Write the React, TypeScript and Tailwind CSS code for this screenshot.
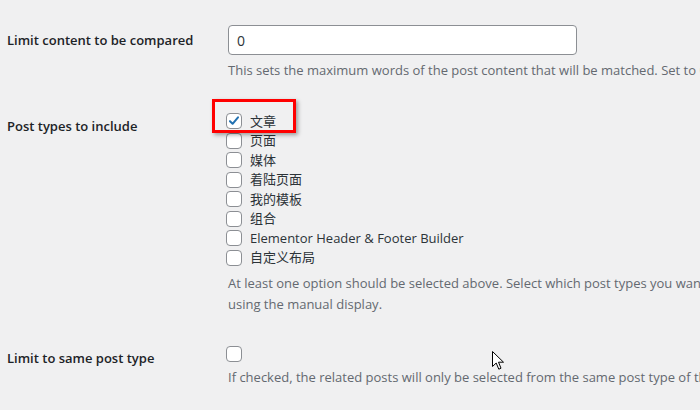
import React from "react";

const postTypes = [
  { label: "文章", checked: true },
  { label: "页面", checked: false },
  { label: "媒体", checked: false },
  { label: "着陆页面", checked: false },
  { label: "我的模板", checked: false },
  { label: "组合", checked: false },
  { label: "Elementor Header & Footer Builder", checked: false },
  { label: "自定义布局", checked: false },
];

function Checkbox({ checked = false }: { checked?: boolean }) {
  return (
    <span className="-ml-[2px] flex h-[16px] w-[16px] shrink-0 items-center justify-center rounded-[4px] border border-[#8c8f94] bg-white">
      {checked && (
        <svg viewBox="0 0 16 16" className="h-[14px] w-[14px]">
          <path d="M3.4 8.2 L6.4 11.2 L12.6 3.8" fill="none" stroke="#2271b1" strokeWidth="2.3" strokeLinecap="round" strokeLinejoin="round" />
        </svg>
      )}
    </span>
  );
}

function Cursor() {
  return (
    <svg viewBox="0 0 13 20" className="absolute left-[492px] top-[351px] h-[20px] w-[13px]">
      <path d="M0.5 0.5 L0.5 15.5 L4.2 12 L6.8 18.2 L9 17.2 L6.5 11.2 L11.5 11.2 Z" fill="white" stroke="black" strokeWidth="1" strokeLinejoin="miter" />
    </svg>
  );
}

export default function App() {
  return (
    <div className="relative h-[410px] w-[700px] overflow-hidden bg-[#f0f0f1] pl-[7px] font-['Open_Sans','Noto_Sans_CJK_SC',sans-serif] text-[#1d2327]">
      <div className="flex pt-[25px]">
        <div className="w-[221px] shrink-0 text-[13px] font-semibold leading-[30px]">Limit content to be compared</div>
        <div className="min-w-0 flex-1">
          <div className="flex h-[30px] w-[349px] items-center rounded-[4px] border border-[#8c8f94] bg-white px-[8px] text-[14px] text-[#2c3338]">0</div>
          <p className="mt-[6px] whitespace-nowrap text-[13px] leading-[19.5px] text-[#646970]">
            This sets the maximum words of the post content that will be matched. Set to 0 for no limit.
          </p>
        </div>
      </div>

      <div className="mt-[31px] flex">
        <div className="w-[221px] shrink-0 pt-[4px] text-[13px] font-semibold leading-[20px]">Post types to include</div>
        <div className="min-w-0 flex-1">
          <ul>
            {postTypes.map((t) => (
              <li key={t.label} className="flex h-[19.5px] items-center gap-[8px] text-[13px] text-[#2c3338]">
                <Checkbox checked={t.checked} />
                <span className="whitespace-nowrap leading-[19.5px]">{t.label}</span>
              </li>
            ))}
          </ul>
          <p className="mt-[5px] whitespace-nowrap text-[13px] leading-[21px] text-[#646970]">
            At least one option should be selected above. Select which post types you want to include.
            <br />
            using the manual display.
          </p>
        </div>
      </div>

      <div className="mt-[31px] flex">
        <div className="w-[221px] shrink-0 pt-[2px] text-[13px] font-semibold leading-[20px]">Limit to same post type</div>
        <div className="min-w-0 flex-1">
          <Checkbox />
          <p className="mt-[6px] whitespace-nowrap text-[13px] leading-[19.5px] text-[#646970]">
            If checked, the related posts will only be selected from the same post type of the current post.
          </p>
        </div>
      </div>

      <div className="absolute left-[212px] top-[99px] h-[34px] w-[84px] border-[3px] border-[#f00] shadow-[2px_2px_4px_rgba(0,0,0,0.35)]" />
      <Cursor />
    </div>
  );
}
